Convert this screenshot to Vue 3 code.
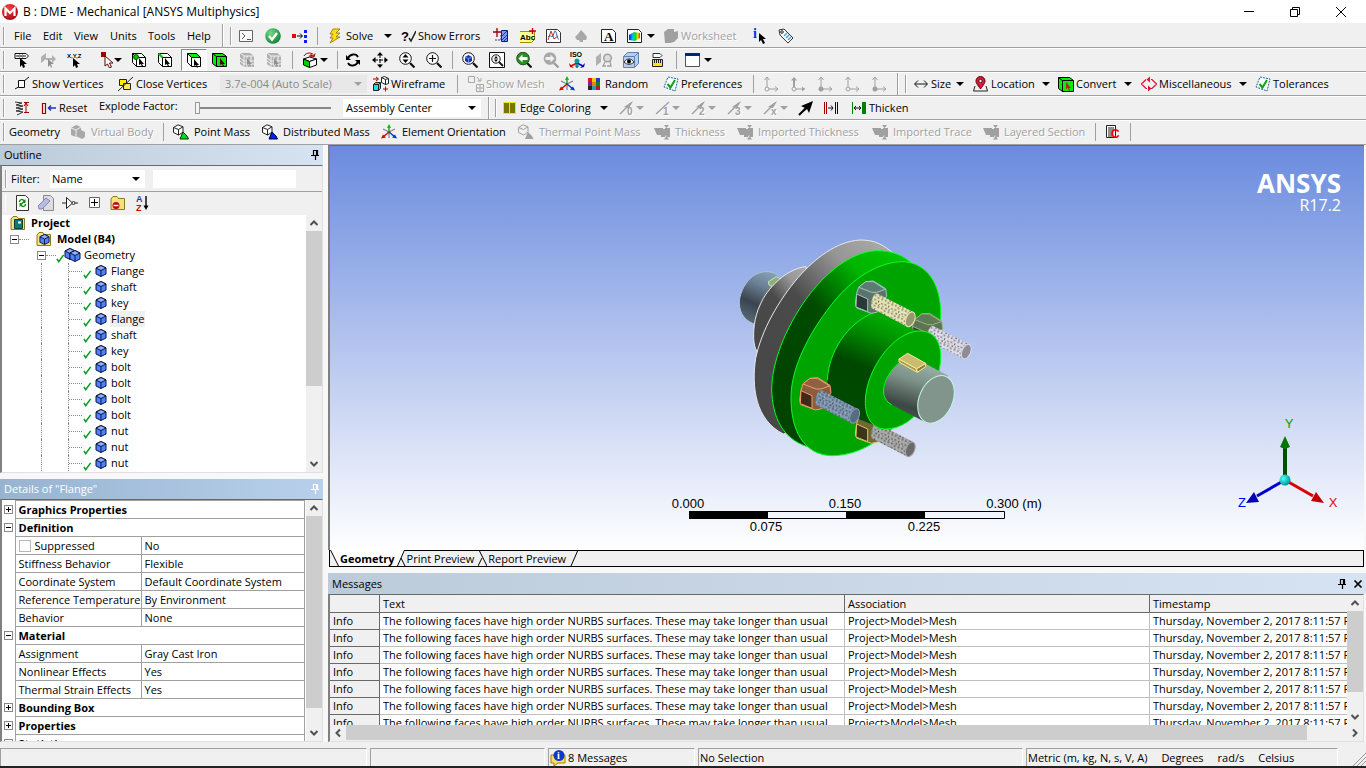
<script setup>
import { ref } from 'vue'

// toolbar item: [kind, slot width, icon, label]
// kinds: btn / off (disabled) / on (pressed) / drop / dropoff / sep / end / grip
const menuBar = [
  ['grip', 14],
  ['menu', 29, '', 'File'],
  ['menu', 31, '', 'Edit'],
  ['menu', 36, '', 'View'],
  ['menu', 38, '', 'Units'],
  ['menu', 39, '', 'Tools'],
  ['menu', 35, '', 'Help'],
  ['end', 5],
  ['grip', 12],
  ['btn', 26, 'term'],
  ['btn', 27, 'ok'],
  ['btn', 25, 'dots'],
  ['sep', 11],
  ['btn', 56, 'bolt', 'Solve'],
  ['drop', 16],
  ['btn', 93, 'qcheck', 'Show Errors'],
  ['btn', 27, 'section'],
  ['btn', 26, 'abc'],
  ['btn', 27, 'chart'],
  ['off', 28, 'spade'],
  ['btn', 26, 'lettera'],
  ['btn', 20, 'rainbow'],
  ['drop', 16],
  ['off', 90, 'sheet', 'Worksheet'],
  ['btn', 25, 'info'],
  ['btn', 20, 'tag'],
]

const selectBar = [
  ['grip', 14],
  ['btn', 26, 'label'],
  ['off', 27, 'dir'],
  ['btn', 34, 'xyz'],
  ['btn', 13, 'pick'],
  ['drop', 17],
  ['btn', 26, 'cubev'],
  ['btn', 24, 'cubee'],
  ['on', 26, 'cubef'],
  ['gap', 5],
  ['btn', 27, 'cubeb'],
  ['off', 27, 'meshb'],
  ['off', 26, 'meshb'],
  ['sep', 10],
  ['btn', 18, 'extend'],
  ['drop', 17],
  ['sep', 8],
  ['btn', 27, 'rotate'],
  ['btn', 27, 'pan'],
  ['btn', 27, 'zoomud'],
  ['btn', 26, 'zoomin'],
  ['sep', 10],
  ['btn', 27, 'zoomfit'],
  ['btn', 27, 'zoombox'],
  ['btn', 27, 'prev'],
  ['off', 26, 'next'],
  ['btn', 27, 'iso'],
  ['off', 27, 'look'],
  ['btn', 27, 'eye'],
  ['btn', 26, 'ruler'],
  ['sep', 9],
  ['btn', 19, 'window'],
  ['drop', 16],
]

const graphicsBar = [
  ['grip', 14],
  ['btn', 104, 'vert', 'Show Vertices'],
  ['btn', 102, 'close', 'Close Vertices'],
  ['scale', 153],
  ['btn', 84, 'wire', 'Wireframe'],
  ['sep', 11],
  ['off', 91, 'mesh', 'Show Mesh'],
  ['btn', 28, 'triad'],
  ['btn', 76, 'random', 'Random'],
  ['btn', 90, 'pref', 'Preferences'],
  ['sep', 10],
  ['off', 27, 'ax1'],
  ['off', 27, 'ax2'],
  ['off', 27, 'ax3'],
  ['off', 27, 'ax1'],
  ['off', 26, 'ax3'],
  ['end', 5],
  ['grip', 11],
  ['btn', 43, 'size', 'Size'],
  ['drop', 17],
  ['btn', 69, 'pin', 'Location'],
  ['drop', 16],
  ['btn', 66, 'convert', 'Convert'],
  ['drop', 17],
  ['btn', 98, 'misc', 'Miscellaneous'],
  ['drop', 16],
  ['btn', 80, 'pref', 'Tolerances'],
]

const edgeBar = [
  ['end', 4],
  ['grip', 10],
  ['btn', 98, 'edge', 'Edge Coloring'],
  ['drop', 19],
  ['off', 17, 'n0'],
  ['dropoff', 19],
  ['off', 17, 'n1'],
  ['dropoff', 19],
  ['off', 17, 'n2'],
  ['dropoff', 19],
  ['off', 17, 'n3'],
  ['dropoff', 19],
  ['off', 17, 'nx'],
  ['dropoff', 18],
  ['btn', 25, 'dart'],
  ['btn', 28, 'gap'],
  ['btn', 70, 'thick', 'Thicken'],
]

const geometryBar = [
  ['grip', 9],
  ['menu', 61, '', 'Geometry'],
  ['off', 93, 'vbody', 'Virtual Body'],
  ['sep', 10],
  ['btn', 89, 'pmass', 'Point Mass'],
  ['btn', 119, 'dmass', 'Distributed Mass'],
  ['btn', 137, 'triad', 'Element Orientation'],
  ['off', 136, 'tmass', 'Thermal Point Mass'],
  ['off', 83, 'layer', 'Thickness'],
  ['off', 135, 'layer', 'Imported Thickness'],
  ['off', 111, 'layer', 'Imported Trace'],
  ['off', 112, 'layer', 'Layered Section'],
  ['sep', 10],
  ['btn', 25, 'command'],
  ['sep', 10],
]

const bars = [
  { id: 'menu', items: menuBar },
  { id: 'select', items: selectBar },
  { id: 'graphics', items: graphicsBar },
  { id: 'edge', items: edgeBar },
  { id: 'geometry', items: geometryBar },
]

const plain = ['btn', 'off', 'on', 'menu']

// letters drawn on top of an icon
const glyphs = {
  qcheck: { text: '?', x: 1, y: 13, size: 13 },
  abc: { text: 'Abc', x: 0, y: 12, size: 8 },
  lettera: { text: 'A', x: 3, y: 13, size: 13, serif: true },
  info: { text: 'i', x: 0, y: 10, size: 14, fill: '#0030f0', serif: true },
  xyz: { text: 'X,Y,Z', x: 0, y: 6, size: 6 },
  iso: { text: 'ISO', x: 1, y: 5, size: 7 },
  n0: { text: '0', x: 8, y: 15, size: 10, fill: '#a0a0a0' },
  n1: { text: '1', x: 8, y: 15, size: 10, fill: '#a0a0a0' },
  n2: { text: '2', x: 8, y: 15, size: 10, fill: '#a0a0a0' },
  n3: { text: '3', x: 8, y: 15, size: 10, fill: '#a0a0a0' },
  nx: { text: 'x', x: 8, y: 15, size: 10, fill: '#a0a0a0' },
  command: { text: 'C', x: 6, y: 14, size: 12, fill: '#f00000' },
}

// outline tree
const bodies = ['Flange', 'shaft', 'key', 'Flange', 'shaft', 'key', 'bolt', 'bolt', 'bolt', 'bolt', 'nut', 'nut', 'nut']
const selectedBody = ref(3)
const filterText = ref('')
const explode = ref(0)

// details grid
const details = [
  { group: 'Graphics Properties', open: false },
  { group: 'Definition', open: true },
  { name: 'Suppressed', value: 'No', check: true },
  { name: 'Stiffness Behavior', value: 'Flexible' },
  { name: 'Coordinate System', value: 'Default Coordinate System' },
  { name: 'Reference Temperature', value: 'By Environment' },
  { name: 'Behavior', value: 'None' },
  { group: 'Material', open: true },
  { name: 'Assignment', value: 'Gray Cast Iron' },
  { name: 'Nonlinear Effects', value: 'Yes' },
  { name: 'Thermal Strain Effects', value: 'Yes' },
  { group: 'Bounding Box', open: false },
  { group: 'Properties', open: false },
  { group: 'Statistics', open: false },
]

const messages = Array.from({ length: 7 }, () => ({
  type: 'Info',
  text: 'The following faces have high order NURBS surfaces. These may take longer than usual',
  assoc: 'Project>Model>Mesh',
  time: 'Thursday, November 2, 2017 8:11:57 PM',
}))

// bolts behind the hub and in front of it
const backBolts = [
  { x: 168, y: 97, dark: '#33402f', mid: '#5c7454', top: '#5f7a55', line: '#93b487', rod: '#dcdae6', cap: '#8e8c98' },
  { x: 0, y: 390, dark: '#3c3618', mid: '#6f6736', top: '#8a8044', line: '#e0c860', rod: '#a9a9a9', cap: '#6a6a6a' },
]
const frontBolts = [
  { x: 0, y: 0, dark: '#2c3836', mid: '#5c736d', top: '#5f7a72', line: '#9cc8be', rod: '#e6e3b4', cap: '#98966f' },
  { x: -167, y: 290, dark: '#43281a', mid: '#8b5d3e', top: '#8f6142', line: '#ee9f66', rod: '#8199b4', cap: '#566b84' },
]
</script>

<template>
  <div class="app">
    <!-- shared icon shapes -->
    <svg class="defs" aria-hidden="true">
      <defs>
        <radialGradient id="gOk" cx=".35" cy=".3" r=".8"><stop offset="0" stop-color="#6fdc8b" /><stop offset="1" stop-color="#0a7a2c" /></radialGradient>
        <linearGradient id="gRain"><stop offset="0" stop-color="#0018e0" /><stop offset=".35" stop-color="#00c8d8" /><stop offset=".6" stop-color="#20d020" /><stop offset=".8" stop-color="#f0e000" /><stop offset="1" stop-color="#f02000" /></linearGradient>
        <radialGradient id="gRed" cx=".4" cy=".3" r=".8"><stop offset="0" stop-color="#f04848" /><stop offset="1" stop-color="#a80010" /></radialGradient>
      </defs>
      <symbol id="i-term" viewBox="0 0 16 16"><path d="M.5 2.500h13v11H.5z" fill="#f8f8f8" stroke="#666" /><path d="M3 5l3 3-3 3M8 11.500h4" fill="none" stroke="#555" /></symbol>
      <symbol id="i-ok" viewBox="0 0 16 16"><circle cx="8" cy="8" r="7.800" fill="url(#gOk)" /><path d="M4 8l3 3.500L12 5" fill="none" stroke="#fff" stroke-width="2.400" /></symbol>
      <symbol id="i-dots" viewBox="0 0 16 16"><path d="M0 6h4v4H0z" fill="#f00000" /><path d="M5 8h5M8 5.500L10.500 8 8 10.500" fill="none" stroke="#000" /><path d="M12 2h3v3h-3zM12 7h3v3h-3zM12 12h3v3h-3z" fill="#0020f0" /></symbol>
      <symbol id="i-bolt" viewBox="0 0 16 16"><path d="M5 1h7L8 5h4L8 9h4L2 15l3-5H2l3-4H2z" fill="#ffe000" stroke="#8a7000" stroke-width=".8" /></symbol>
      <symbol id="i-qcheck" viewBox="0 0 16 16"><path d="M9 10l2 3 5-10" fill="none" stroke="#222" stroke-width="1.500" /></symbol>
      <symbol id="i-section" viewBox="0 0 16 16"><path d="M8.500 2.500h6v11h-6z" fill="#7a9cf0" stroke="#002080" /><path d="M9 8l5-5M9 12l5-5M11 13l3-3" stroke="#1838a0" /><path d="M2 12h6V7" fill="none" stroke="#303880" stroke-dasharray="2 1" /><path d="M0 4h9M4 0v9" stroke="#900" stroke-width="1.300" /></symbol>
      <symbol id="i-abc" viewBox="0 0 16 16"><path d="M-.5 3.500h15v8l-3 3H-.5z" fill="#ffff90" stroke="#a09000" /><path d="M9 3h7M12.500 0v6" stroke="#c00000" stroke-width="1.300" /></symbol>
      <symbol id="i-chart" viewBox="0 0 16 16"><path d="M.5 1.500h11l3 3v10H.5z" fill="#fff" stroke="#333" /><path d="M2 12L5 3l3 8 4-3" fill="none" stroke="#c03030" /><path d="M2 9c3-4 4 4 6-4s3 8 5 6" fill="none" stroke="#4058c0" /></symbol>
      <symbol id="i-spade" viewBox="0 0 16 16"><path d="M8 2l-3 4-3 3 2 3h2l1 2h3v-2h3l1-3-3-4z" fill="#a8a8a8" /></symbol>
      <symbol id="i-lettera" viewBox="0 0 16 16"><path d="M.5 1.500h11l3 3v10H.5z" fill="#fff" stroke="#222" /></symbol>
      <symbol id="i-rainbow" viewBox="0 0 16 16"><path d="M.5 1.500h11l3 3v10H.5z" fill="#fff" stroke="#222" /><path d="M2 7l5-3 6 1v5l-5 3-6-1z" fill="url(#gRain)" /></symbol>
      <symbol id="i-sheet" viewBox="0 0 16 16"><path d="M1 4l4-3h6v3l4-1v7l-4 4-4 1H2z" fill="#a0a0a0" /></symbol>
      <symbol id="i-info" viewBox="0 0 16 16"><path d="M6 5v9l2-2 2 4 2-1-2-4h3z" fill="#000" /></symbol>
      <symbol id="i-tag" viewBox="0 0 16 16"><path d="M1 2l5-1 9 9-5 5-8-8z" fill="#fff" stroke="#333" /><path d="M6 8l3-3M8 10l3-3M10 12l3-3" stroke="#4aa0d8" stroke-width="1.500" /><circle cx="4" cy="4" r="1.300" fill="none" stroke="#222" /></symbol>
      <symbol id="i-label" viewBox="0 0 16 16"><path d="M1 1.500h11l2.500 2.500L12 6.500H1z" fill="#fff" stroke="#111" /><path d="M3 3v2M11 3v2" stroke="#111" /><circle cx="5.500" cy="4" r="1" fill="none" stroke="#111" stroke-width=".8" /><circle cx="8.500" cy="4" r="1" fill="none" stroke="#111" stroke-width=".8" /><path d="M6 6v9l2-2 1 3 2-1-1-3h3z" /></symbol>
      <symbol id="i-dir" viewBox="0 0 16 16"><path d="M1 5l5-4v6L1 11zM6 6h6V3l4 4-4 4V8H6z" fill="#b0b0b0" /><path d="M8 7v8l2-2 1 3 1-1-1-3h3z" fill="#909090" /></symbol>
      <symbol id="i-xyz" viewBox="0 0 16 16"><path d="M6 6v9l2-2 1 3 2-1-1-3h3z" /></symbol>
      <symbol id="i-pick" viewBox="0 0 16 16"><path d="M0 0h5v5H0z" fill="#a00000" /><path d="M4 4v10l2.500-2 2 4 2-1-2-4H12z" fill="#fff" stroke="#600" /></symbol>
      <symbol id="i-cubev" viewBox="0 0 16 16"><path d="M1.500 1.500h9l4 4v9h-9l-4-4zM1.500 1.500l4 4h9M5.500 5.500v9" fill="#fff" stroke="#000" /><circle cx="5" cy="5" r="2.500" fill="#00c000" stroke="#006000" /><path d="M8 6v7l2-1 1 3 1-1-1-2h2z" /></symbol>
      <symbol id="i-cubee" viewBox="0 0 16 16"><path d="M1.500 1.500h9l4 4v9h-9l-4-4zM1.500 1.500l4 4h9M5.500 5.500v9" fill="#fff" stroke="#000" /><path d="M1.500 1.500l4 4" stroke="#00c000" stroke-width="2" /><path d="M8 6v7l2-1 1 3 1-1-1-2h2z" /></symbol>
      <symbol id="i-cubef" viewBox="0 0 16 16"><path d="M1.500 1.500h9l4 4v9h-9l-4-4z" fill="#fff" stroke="#000" /><path d="M1.500 1.500h9l4 4h-9z" fill="#00f000" stroke="#000" /><path d="M5.500 5.500v9" stroke="#000" /><path d="M8 7v7l2-1 1 3 1-1-1-2h2z" /></symbol>
      <symbol id="i-cubeb" viewBox="0 0 16 16"><path d="M.5 1.500h10l4 3v10h-10l-4-3z" fill="#00f000" stroke="#000" /><path d="M.5 1.500l4 3h10M4.500 4.500v10" fill="none" stroke="#000" /><path d="M8 6v7l2-1 1 3 1-1-1-2h2z" fill="#400000" /></symbol>
      <symbol id="i-meshb" viewBox="0 0 16 16"><path d="M1 1h10l4 3v11H5l-4-3z" fill="#b0b0b0" /><path d="M1 6l4 3h10M5 12h10M8 4v11M12 4v11M5 4v11M1 9l4 3M1 1l4 3h10" fill="none" stroke="#f0f0f0" /><path d="M8 6v7l2-1 1 3 1-1-1-2h2z" fill="#909090" /></symbol>
      <symbol id="i-extend" viewBox="0 0 16 16"><path d="M1.500 7l6-2 7 2-7 2.500z" fill="#fff" stroke="#000" /><path d="M1.500 7v6l6 2.500v-6z" fill="#00d000" stroke="#000" /><path d="M7.500 9.500l7-2.500v6l-7 2.500z" fill="#fff" stroke="#000" /><path d="M2 4c2-4 9-4 10 0M9 3l3 2 1-3.500M7 4h4M9 2v4" fill="none" stroke="#a00000" /></symbol>
      <symbol id="i-rotate" viewBox="0 0 16 16"><path d="M3 6c2-4 8-5 10-1M13 10c-2 4-8 5-10 1" fill="none" stroke="#000" stroke-width="1.800" /><path d="M1 3v5h5zM15 13V8h-5z" /></symbol>
      <symbol id="i-pan" viewBox="0 0 16 16"><path d="M8 2v12M2 8h12" stroke="#000" stroke-dasharray="4 1" /><path d="M8 0l3 3.500H5zM8 16l3-3.500H5zM0 8l3.500-3v6zM16 8l-3.500-3v6z" /></symbol>
      <symbol id="i-lens" viewBox="0 0 16 16"><circle cx="6.500" cy="6.500" r="5.800" fill="#fff" stroke="#111" /><path d="M11 11l4.500 4.500" stroke="#111" stroke-width="2.200" /></symbol>
      <symbol id="i-zoomud" viewBox="0 0 16 16"><use href="#i-lens" /><path d="M6.500 2l3 3.500h-6zM6.500 11l3-3.500h-6z" /></symbol>
      <symbol id="i-zoomin" viewBox="0 0 16 16"><use href="#i-lens" /><path d="M6.500 3v7M3 6.500h7" stroke="#111" stroke-width="1.200" /></symbol>
      <symbol id="i-zoomfit" viewBox="0 0 16 16"><use href="#i-lens" /><path d="M3 5l3.500-2L10 5v4l-3.500 2L3 9z" fill="#1838a8" /><path d="M3 5l3.500 1.500L10 5M6.500 6.500V11" stroke="#9ab4ff" fill="none" stroke-width=".7" /></symbol>
      <symbol id="i-zoombox" viewBox="0 0 16 16"><path d="M.5.5h15v15H.5z" fill="#fff" stroke="#111" /><circle cx="7" cy="7" r="4.200" fill="none" stroke="#111" /><path d="M10 10l4 4" stroke="#111" stroke-width="1.800" /><path d="M7 4l2 2.500H5zM7 10l2-2.500H5z" /></symbol>
      <symbol id="i-prev" viewBox="0 0 16 16"><path d="M11 11l4.500 4.500" stroke="#111" stroke-width="2.200" /><circle cx="7" cy="6.500" r="6.300" fill="#2f8a28" stroke="#1a5a18" /><path d="M2.500 6.500l4-4v2.500h5v3h-5v2.500z" fill="#fff" /></symbol>
      <symbol id="i-next" viewBox="0 0 16 16"><path d="M11 11l4.500 4.500" stroke="#999" stroke-width="2.200" /><circle cx="7" cy="6.500" r="6.300" fill="#a8a8a8" /><path d="M11.500 6.500l-4-4v2.500h-5v3h5v2.500z" fill="#f0f0f0" /></symbol>
      <symbol id="i-iso" viewBox="0 0 16 16"><path d="M8 10v5" stroke="#008080" stroke-width="1.500" /><path d="M8 11l-6 3" stroke="#d00000" stroke-width="1.500" /><path d="M8 11l6 3" stroke="#0000c0" stroke-width="1.500" /><path d="M0 11l1 4 4 1z" fill="#d00000" /><path d="M16 11l-1 4-4 1z" fill="#0000c0" /><path d="M5.500 13.500h5L8 16.500z" fill="#008080" /><circle cx="8" cy="9" r="2.500" fill="#00a0a0" /></symbol>
      <symbol id="i-look" viewBox="0 0 16 16"><path d="M0 5l5-4v9l-5 4z" fill="#b0b0b0" /><circle cx="11.500" cy="6" r="3.800" fill="#ddd" stroke="#a0a0a0" stroke-width="1.500" /><path d="M9 10l-2 4h3M14 9l1 5h-4" fill="none" stroke="#a0a0a0" stroke-width="1.300" /></symbol>
      <symbol id="i-eye" viewBox="0 0 16 16"><path d="M.5 4.500l4-4h11v11l-4 4H.5z" fill="#b8ccec" stroke="#6080b0" /><path d="M.5 4.500h11v11M11.500 4.500l4-4" fill="none" stroke="#6080b0" /><path d="M1 10c3-4 7-4 10 0-3 3-7 3-10 0z" fill="#fff" stroke="#222" /><circle cx="6" cy="9.500" r="2" /></symbol>
      <symbol id="i-ruler" viewBox="0 0 16 16"><path d="M3 1.500h7l2 2-2 2H3z" fill="#fff" stroke="#333" /><path d="M2.500 7.500h10v7h-10z" fill="#ffe800" stroke="#222" /><path d="M4.500 8v3M6.500 8v3M8.500 8v3M10.500 8v3" stroke="#222" /></symbol>
      <symbol id="i-window" viewBox="0 0 16 16"><path d="M.5 1.500h14v13H.5z" fill="#fff" stroke="#555" /><path d="M0 1h15v3H0z" fill="#002878" /></symbol>
      <symbol id="i-vert" viewBox="0 0 16 16"><path d="M4.500 4.500h6v7h-6z" fill="#fff" stroke="#111" /><path d="M1 13l3.500-2M10 5l5-4" stroke="#111" /></symbol>
      <symbol id="i-close" viewBox="0 0 16 16"><path d="M1.500 3.500h7v6h-7z" fill="#fff200" stroke="#222" /><path d="M5.500 7.500h7v6h-7z" fill="#ffe850" stroke="#222" /><path d="M0 15l15-14" stroke="#222" /></symbol>
      <symbol id="i-wire" viewBox="0 0 16 16"><path d="M0 3h5M3 1l2.500 2L3 5" fill="none" stroke="#a00000" /><path d="M8.500 1.500l3-1 4 2v5l-3 1-4-2zM8.500 1.500l4 2v5M12.500 3.500l3-1" fill="#fff" stroke="#222" /><path d="M.5 8.500l2-2h5v6l-2 2h-5z" fill="#20e0f0" stroke="#222" /><path d="M.5 8.500h5v6M5.500 8.500l2-2" fill="none" stroke="#222" /><path d="M10 13h5M12.500 10.500v5" stroke="#c00000" /></symbol>
      <symbol id="i-mesh" viewBox="0 0 16 16"><path d="M.5.5h6v6h-6zM8.500 8.500h7v7h-7zM12 8.500v7M8.500 12h7M9 1l3 4M9.500 5H13V2" fill="none" stroke="#a8a8a8" /></symbol>
      <symbol id="i-triad" viewBox="0 0 16 16"><path d="M8 2v6" stroke="#00b000" stroke-width="1.400" /><path d="M8 0l2 4H6z" fill="#00c000" /><path d="M8 8l-6 5" stroke="#d00000" stroke-width="1.400" /><path d="M0 14.500l2-4 3 3z" fill="#e00000" /><path d="M8 8l6 5" stroke="#0030d0" stroke-width="1.400" /><path d="M16 14.500l-2-4-3 3z" fill="#0030e0" /><path d="M2 5l6 3 6-3M8 8v6" stroke="#444" stroke-width=".8" fill="none" /></symbol>
      <symbol id="i-random" viewBox="0 0 16 16"><path d="M1 2h4v4H1z" fill="#e01818" /><path d="M5 2h4v4H5z" fill="#f0c800" /><path d="M9 2h4v4H9z" fill="#2040c0" /><path d="M1 6h4v4H1z" fill="#8020a0" /><path d="M5 6h4v4H5z" fill="#f08000" /><path d="M9 6h4v4H9z" fill="#108030" /><path d="M1 10h4v4H1z" fill="#302020" /><path d="M5 10h4v4H5z" fill="#20a0c0" /><path d="M9 10h4v4H9z" fill="#b02020" /></symbol>
      <symbol id="i-pref" viewBox="0 0 16 16"><path d="M5 1l10 2-3 12L1 11z" fill="#f6fbff" stroke="#24609a" stroke-dasharray="2 1" /><path d="M4.500 8l3 3.500L12 4" fill="none" stroke="#10a010" stroke-width="2" /></symbol>
      <symbol id="i-ax1" viewBox="0 0 16 16"><path d="M4 14V2M4 13h11" stroke="#a0a0a0" /><path d="M1.500 4L4 1l2.500 3M12 10.500l3 2.500-3 2.500" fill="none" stroke="#a0a0a0" /><circle cx="4" cy="13" r="2" fill="#f0f0f0" stroke="#a0a0a0" /></symbol>
      <symbol id="i-ax2" viewBox="0 0 16 16"><path d="M4 13h11" stroke="#a0a0a0" /><path d="M4 14V2" stroke="#a0a0a0" stroke-width="2" /><path d="M1 4.500h6L4 1zM12 10.500l3 2.500-3 2.500" fill="#a0a0a0" /><circle cx="4" cy="13" r="2" fill="#f0f0f0" stroke="#a0a0a0" /></symbol>
      <symbol id="i-ax3" viewBox="0 0 16 16"><path d="M4 14V2M4 13h11" stroke="#a0a0a0" /><path d="M1.500 4L4 1l2.500 3M12 10.500l3 2.500-3 2.500" fill="none" stroke="#a0a0a0" /><circle cx="4" cy="13" r="2.500" fill="#a0a0a0" /></symbol>
      <symbol id="i-size" viewBox="0 0 16 16"><path d="M2 8h12M5 4.500L1.500 8 5 11.500M11 4.500L14.500 8 11 11.500" fill="none" stroke="#111" /></symbol>
      <symbol id="i-pin" viewBox="0 0 16 16"><path d="M2 10l-1.500 5h14L13 10" fill="none" stroke="#222" /><path d="M7.500 13C4 8 3 7 3 5a4.500 4.500 0 019 0c0 2-1 3-4.500 8z" fill="#e01838" stroke="#500" /><circle cx="7.500" cy="5" r="1.700" fill="#fff" stroke="#222" /></symbol>
      <symbol id="i-convert" viewBox="0 0 16 16"><path d="M.5 1.500h11l4 3v11h-11l-4-3z" fill="#00f000" stroke="#000" /><path d="M.5 1.500l4 3h11M4.500 4.500v11" fill="none" stroke="#000" /><path d="M8 6v7l2-1 1 3 1-1-1-2h2z" fill="#c02020" /></symbol>
      <symbol id="i-misc" viewBox="0 0 16 16"><path d="M6 3.500h1M6 12.500H5L1.500 9M10 3.500h1L14.500 7M1.500 7L5 3.500M14.500 9L11 12.500h-1M1.500 7L0 8l1.500 1M14.500 7L16 8l-1.500 1" fill="none" stroke="#e01030" stroke-width="1.200" /><path d="M9 .5v6L5.500 3.500zM7 15.500v-6l3.500 3z" fill="#e01030" /></symbol>
      <symbol id="i-spring" viewBox="0 0 16 16"><path d="M1 2l7 1-6 2 7 1-7 2 7 1-7 2 7 1-6 3" fill="none" stroke="#333" /><path d="M12 3v9M10 2.500h5M10 12.500h5M10 6l2-3 2 3" fill="none" stroke="#a00000" /></symbol>
      <symbol id="i-reset" viewBox="0 0 16 16"><path d="M1.500 3.500h3v10h-3z" fill="none" stroke="#a00000" stroke-width="1.200" /><path d="M8 8h7M10 5.500L7.500 8l2.500 2.500" fill="none" stroke="#2030c0" stroke-width="1.500" /></symbol>
      <symbol id="i-edge" viewBox="0 0 16 16"><path d="M1 2h13v12H1z" fill="#e8e800" /><path d="M2 3h5v10H2zM8 3h5v10H8z" fill="#787800" /></symbol>
      <symbol id="i-stroke" viewBox="0 0 16 16"><path d="M1 14L12 3" stroke="#a0a0a0" stroke-width="1.500" /><path d="M14 1L5 7l5 1z" fill="#a0a0a0" /></symbol>
      <symbol id="i-n0" viewBox="0 0 16 16"><use href="#i-stroke" /></symbol>
      <symbol id="i-n1" viewBox="0 0 16 16"><path d="M1 14L14 2" stroke="#a0a0a0" stroke-width="1.300" /></symbol>
      <symbol id="i-n2" viewBox="0 0 16 16"><use href="#i-stroke" /></symbol>
      <symbol id="i-n3" viewBox="0 0 16 16"><use href="#i-stroke" /></symbol>
      <symbol id="i-nx" viewBox="0 0 16 16"><use href="#i-stroke" /></symbol>
      <symbol id="i-dart" viewBox="0 0 16 16"><path d="M1 15L9 7" stroke="#000" stroke-width="2" /><path d="M15 1L3 6l4 2-3 5 5-4 2 4z" /></symbol>
      <symbol id="i-gap" viewBox="0 0 16 16"><path d="M1.500 2v12M3.500 2v12" stroke="#a00000" /><path d="M5 8h5M8 5.500L10 8l-2 2.500M12.500 2v12M14.500 2v12" fill="none" stroke="#111" /></symbol>
      <symbol id="i-thick" viewBox="0 0 16 16"><path d="M1.500 2v12" stroke="#008000" /><path d="M3 8h7M5 6L3 8l2 2M8 6l2 2-2 2" fill="none" stroke="#111" /><path d="M11 2h4v12h-4z" fill="#008000" /></symbol>
      <symbol id="i-vbody" viewBox="0 0 16 16"><path d="M1 4l5-3 5 2v9l-5 1-5-2zM8 8l3-2 4 2v5l-3 2-4-2z" fill="#a8a8a8" /><path d="M1 4l5 2 5-3M6 6v7" fill="none" stroke="#f0f0f0" /></symbol>
      <symbol id="i-wcube" viewBox="0 0 16 16"><path d="M.5 3.500L5 .8l5 2v5.500L5.500 11l-5-2.500z" fill="#fff" stroke="#222" /><path d="M.5 3.500l5 2 4.500-2.700M5.500 5.500V11" fill="none" stroke="#222" /></symbol>
      <symbol id="i-pmass" viewBox="0 0 16 16"><use href="#i-wcube" /><path d="M10 8l4 4 1.500 3H7z" fill="#00d820" stroke="#003800" /></symbol>
      <symbol id="i-dmass" viewBox="0 0 16 16"><use href="#i-wcube" /><path d="M10 8l4 4 1.500 3H7z" fill="#0020f0" stroke="#000040" /></symbol>
      <symbol id="i-tmass" viewBox="0 0 16 16"><path d="M.5 3.500L5 .8l5 2v5.500L5.500 11l-5-2.500zM.5 3.500l5 2 4.500-2.700" fill="none" stroke="#a0a0a0" /><path d="M10 8l4 4 1.500 3H7z" fill="#a0a0a0" /></symbol>
      <symbol id="i-layer" viewBox="0 0 16 16"><path d="M0 4h9v1h2V4h5v9h-3l-1-2-1 2H7v-2H3z" fill="#a0a0a0" /><path d="M10 1h5l-2.500 3zM10 15.500h5L12.500 12z" fill="#a0a0a0" /></symbol>
      <symbol id="i-command" viewBox="0 0 16 16"><path d="M1.500 1.500h9v12h-9z" fill="#fff" stroke="#222" /><path d="M3 4h6M3 6h6M3 8h5M3 10h4M3 12h4" stroke="#222" /></symbol>
      <symbol id="i-pinned" viewBox="0 0 10 10"><path d="M3.500 5.500v-5h4v5M1 5.500h8M5.500 6v4M6.500 1v4" fill="none" stroke="currentColor" stroke-width="1.200" /></symbol>
      <symbol id="i-cube" viewBox="0 0 12 12"><path d="M1 3l5-2.500L11 3v6l-5 2.500L1 9z" fill="#4f82ff" stroke="#0a1440" stroke-linejoin="round" /><path d="M1 3l5 2.500L11 3 6 .5z" fill="#8cb0ff" stroke="#0a1440" stroke-linejoin="round" /><path d="M6 5.500v6" stroke="#0a1440" /></symbol>
      <symbol id="i-tick" viewBox="0 0 10 10"><path d="M1 5.500l2 3L8.500 1" fill="none" stroke="#009a10" stroke-width="1.600" /></symbol>
      <symbol id="i-folder" viewBox="0 0 16 16"><path d="M1 4l2-2.500h4L9 4V3.500h5.500v11H1z" fill="#f4e27c" stroke="#8a7a20" /></symbol>
      <symbol id="i-up" viewBox="0 0 16 16"><path d="M4.500 10L8 6.500l3.500 3.500" fill="none" stroke="#505050" stroke-width="2" /></symbol>
      <symbol id="i-down" viewBox="0 0 16 16"><path d="M4.500 6L8 9.500 11.500 6" fill="none" stroke="#505050" stroke-width="2" /></symbol>
      <symbol id="i-left" viewBox="0 0 16 16"><path d="M10 4.500L6.500 8l3.500 3.500" fill="none" stroke="#505050" stroke-width="2" /></symbol>
      <symbol id="i-right" viewBox="0 0 16 16"><path d="M6 4.500L9.500 8 6 11.500" fill="none" stroke="#505050" stroke-width="2" /></symbol>
    </svg>

    <!-- title bar -->
    <header class="title-bar">
      <svg class="logo" viewBox="0 0 16 16"><circle cx="8" cy="8" r="8" fill="url(#gRed)" /><path d="M3.500 12V4.500L8 9l4.500-4.500V12" fill="none" stroke="#fff" stroke-width="2.200" /></svg>
      <h1>B : DME - Mechanical [ANSYS Multiphysics]</h1>
      <div class="window-buttons">
        <button aria-label="Minimize"><svg viewBox="0 0 12 12"><path d="M1 5.500h10" stroke="#000" /></svg></button>
        <button aria-label="Restore"><svg viewBox="0 0 12 12"><path d="M1.500 3.500h7v7h-7zM3.500 3V1.500h7v7H9" fill="none" stroke="#000" /></svg></button>
        <button aria-label="Close"><svg viewBox="0 0 12 12"><path d="M1 1l10 10M11 1L1 11" stroke="#000" /></svg></button>
      </div>
    </header>

    <!-- toolbars -->
    <nav v-for="bar in bars" :key="bar.id" class="bar" :class="bar.id">
      <template v-if="bar.id === 'edge'">
        <span class="grip wide"></span>
        <button class="tool spring" aria-label="Explode"><svg class="ico"><use href="#i-spring" /></svg></button>
        <button class="tool reset"><svg class="ico"><use href="#i-reset" /></svg><span>Reset</span></button>
        <label class="explode" for="explode">Explode Factor:</label>
        <input id="explode" v-model="explode" class="slider" type="range" min="0" max="10" />
        <div class="combo assembly">
          <select aria-label="Explode center"><option>Assembly Center</option></select>
          <i class="arrow"></i>
        </div>
      </template>
      <template v-for="(item, i) in bar.items" :key="i">
        <button
          v-if="plain.includes(item[0])"
          class="tool"
          :class="item[0]"
          :style="{ width: item[1] + 'px' }"
          :disabled="item[0] === 'off'"
          :aria-label="item[3] || item[2]"
        >
          <svg v-if="item[2]" class="ico" viewBox="0 0 16 16">
            <use :href="'#i-' + item[2]" />
            <text
              v-if="glyphs[item[2]]"
              class="glyph"
              :class="{ serif: glyphs[item[2]].serif }"
              :x="glyphs[item[2]].x"
              :y="glyphs[item[2]].y"
              :font-size="glyphs[item[2]].size"
              :fill="glyphs[item[2]].fill"
            >{{ glyphs[item[2]].text }}</text>
          </svg>
          <span v-if="item[3]">{{ item[3] }}</span>
        </button>
        <button v-else-if="item[0].startsWith('drop')" class="tool" :class="item[0]" :style="{ width: item[1] + 'px' }" aria-label="More"><i class="arrow"></i></button>
        <div v-else-if="item[0] === 'scale'" class="combo scale">
          <select aria-label="Vertex scale" disabled><option>3.7e-004 (Auto Scale)</option></select>
          <i class="arrow"></i>
        </div>
        <span v-else :class="item[0]" :style="{ width: item[1] + 'px' }"></span>
      </template>
    </nav>

    <div class="work">
      <aside class="side">
        <!-- outline -->
        <section class="panel outline">
          <h2 class="caption"><span>Outline</span><svg class="pin"><use href="#i-pinned" /></svg></h2>
          <div class="frame">
            <div class="filter">
              <span class="grip filter-grip"></span>
              <label for="filter-by">Filter:</label>
              <div class="combo filter-by">
                <select id="filter-by"><option>Name</option></select>
                <i class="arrow"></i>
              </div>
              <input v-model="filterText" class="filter-text" type="text" aria-label="Filter text" />
            </div>
            <div class="tree-tools">
              <span class="grip"></span>
              <button aria-label="Refresh"><svg viewBox="0 0 16 16"><path d="M2.500.5h9l3 3v12h-12z" fill="#fff" stroke="#333" /><path d="M5.500 7c0-3 3-3 5-1M11.500 9c0 3-3 3-5 1" fill="none" stroke="#109010" stroke-width="1.500" /><path d="M11.500 4v4h-4zM5.500 12V8h4z" fill="#109010" /></svg></button>
              <button aria-label="Clear"><svg viewBox="0 0 16 16"><path d="M5.500.5h7l3 3v12h-10z" fill="#ddd" stroke="#888" /><path d="M0 11l8-8 4 3-8 8H1z" fill="#b8bce0" stroke="#8088b8" /></svg></button>
              <button aria-label="Invert"><svg viewBox="0 0 16 16"><path d="M0 8h4M4.500 2.500l6 5.500-6 5.500zM13 8h3" fill="#fff" stroke="#222" /><circle cx="11.500" cy="8" r="1.500" fill="#fff" stroke="#222" /></svg></button>
              <button aria-label="Expand all"><svg viewBox="0 0 16 16"><path d="M3.500 2.500h10v10h-10z" fill="#fff" stroke="#666" /><path d="M5 7.500h7M8.500 4v7" stroke="#000" /></svg></button>
              <button aria-label="Hide folders"><svg viewBox="0 0 16 16"><use href="#i-folder" /><circle cx="6" cy="10.500" r="3.500" fill="#c00018" /><path d="M3.500 10.500h5" stroke="#fff" stroke-width="1.500" /></svg></button>
              <button aria-label="Sort">
                <svg viewBox="0 0 16 16"><text class="glyph" x="2" y="7" font-size="9" fill="#1840a0">A</text><text class="glyph" x="2" y="16" font-size="9" fill="#c01010">Z</text><path d="M12 1v11" stroke="#111" stroke-width="1.500" /><path d="M9.500 10.500h5L12 15z" /></svg>
              </button>
            </div>
            <div class="scroll-box">
              <ul class="tree">
                <li class="root">
                  <svg class="ico" viewBox="0 0 16 16"><use href="#i-folder" /><path d="M4.500 4.500h8v9h-8z" fill="#0d7a78" stroke="#043" /><path d="M8 6.500h3v2H8z" fill="#fff" /></svg>
                  <b>Project</b>
                </li>
                <li class="model">
                  <button class="box minus" aria-label="Collapse"></button><span class="dash"></span>
                  <svg class="ico" viewBox="0 0 16 16"><use href="#i-folder" /><use href="#i-cube" x="3" y="3" width="11" height="11" /></svg>
                  <b>Model (B4)</b>
                </li>
                <li class="geometry">
                  <button class="box minus" aria-label="Collapse"></button><span class="dash"></span>
                  <svg class="tick"><use href="#i-tick" /></svg>
                  <svg class="ico" viewBox="0 0 16 16"><use href="#i-cube" x="-1" y="1" width="12" height="12" /><use href="#i-cube" x="4" y="3" width="12" height="12" /></svg>
                  <span>Geometry</span>
                </li>
                <li v-for="(name, i) in bodies" :key="i" class="body" @click="selectedBody = i">
                  <span class="trunk"></span><span class="branch"></span>
                  <svg class="tick"><use href="#i-tick" /></svg>
                  <svg class="cube"><use href="#i-cube" /></svg>
                  <span class="name" :class="{ selected: selectedBody === i }">{{ name }}</span>
                </li>
              </ul>
              <div class="scrollbar">
                <button aria-label="Up"><svg><use href="#i-up" /></svg></button>
                <div class="track"><div class="thumb tree-thumb"></div></div>
                <button aria-label="Down"><svg><use href="#i-down" /></svg></button>
              </div>
            </div>
          </div>
        </section>

        <!-- details -->
        <section class="panel details">
          <h2 class="caption active"><span>Details of "Flange"</span><svg class="pin"><use href="#i-pinned" /></svg></h2>
          <div class="frame">
            <div class="scroll-box">
              <div class="grid-wrap">
                <table class="grid">
                  <colgroup><col class="c-box" /><col class="c-name" /><col /></colgroup>
                  <tbody>
                    <tr v-for="(row, i) in details" :key="i">
                      <td class="gutter"><button v-if="row.group" class="box" :class="row.open ? 'minus' : 'plus'" aria-label="Toggle group"></button></td>
                      <th v-if="row.group" colspan="2">{{ row.group }}</th>
                      <template v-else>
                        <td>
                          <label v-if="row.check" class="check"><input type="checkbox" />{{ row.name }}</label>
                          <template v-else>{{ row.name }}</template>
                        </td>
                        <td>{{ row.value }}</td>
                      </template>
                    </tr>
                  </tbody>
                </table>
              </div>
              <div class="scrollbar">
                <button aria-label="Up"><svg><use href="#i-up" /></svg></button>
                <div class="track"><div class="thumb details-thumb"></div></div>
                <button aria-label="Down"><svg><use href="#i-down" /></svg></button>
              </div>
            </div>
          </div>
        </section>
      </aside>

      <main class="main">
        <!-- 3D view -->
        <div class="view">
          <svg class="scene" viewBox="330 146 1034 404" preserveAspectRatio="xMidYMid meet">
            <defs>
              <linearGradient id="sRear" x1=".7" y1="0" x2=".3" y2="1"><stop offset="0" stop-color="#8aa2b8" /><stop offset=".3" stop-color="#6c8195" /><stop offset=".65" stop-color="#3a444e" /><stop offset="1" stop-color="#5a6a78" /></linearGradient>
              <linearGradient id="sGray" x1=".9" y1="0" x2=".2" y2=".8"><stop offset="0" stop-color="#b0b0b0" /><stop offset=".3" stop-color="#969696" /><stop offset=".6" stop-color="#4a4a4a" /><stop offset="1" stop-color="#484848" /></linearGradient>
              <linearGradient id="sGreen" x1=".85" y1="0" x2=".2" y2=".7"><stop offset="0" stop-color="#00c800" /><stop offset=".3" stop-color="#00b400" /><stop offset=".62" stop-color="#004c00" /><stop offset="1" stop-color="#004400" /></linearGradient>
              <linearGradient id="sHub" x1=".75" y1="0" x2=".35" y2="1"><stop offset="0" stop-color="#00c000" /><stop offset=".25" stop-color="#009400" /><stop offset=".55" stop-color="#004800" /><stop offset="1" stop-color="#004a00" /></linearGradient>
              <linearGradient id="sShaft" x1=".7" y1="0" x2=".35" y2="1"><stop offset="0" stop-color="#9ab4a8" /><stop offset=".35" stop-color="#7b8f86" /><stop offset=".75" stop-color="#3c4643" /><stop offset="1" stop-color="#4c5854" /></linearGradient>
              <pattern id="thread" width="34" height="26" patternUnits="userSpaceOnUse" patternTransform="rotate(27)">
                <path d="M1 1h3v5H1zM10 4h6v3h-6zM24 1h3v6h-3zM4 13h6v3H4zM17 12h3v6h-3zM28 15h5v3h-5zM1 21h3v3H1zM12 22h5v3h-5zM23 21h3v4h-3z" fill="#222" fill-opacity=".75" />
                <path d="M6 7h3v3H6zM20 8h3v3h-3zM28 22h3v3h-3z" fill="#fff" fill-opacity=".4" />
              </pattern>
              <radialGradient id="sBall" cx=".35" cy=".35" r=".7"><stop offset="0" stop-color="#50ffff" /><stop offset="1" stop-color="#009090" /></radialGradient>
            </defs>

            <g transform="translate(730 230) scale(.33333)" stroke-width="3" stroke-linejoin="round">
              <path d="M170 170C150 130 125 122 98 126C50 135 28 190 28 218C28 255 50 275 78 284L170 250z" fill="url(#sRear)" stroke="#a8c4dc" />
              <path d="M115 155l24-15 18 9-24 24-16-8z" fill="#8fae80" stroke="#c8e8b0" />
              <path d="M228 110C180 115 130 155 100 205C75 250 70 290 71 325C72 345 76 360 84 366L260 300z" fill="url(#sGray)" stroke="#e8e8e8" />
              <path d="M480 62C450 38 425 30 390 30C320 34 255 85 205 142C145 212 95 300 77 385C64 470 76 570 160 612L350 560L560 120z" fill="url(#sGray)" stroke="#e8e8e8" />
              <path d="M550 105C520 74 485 62 440 62C360 66 285 130 230 205C165 295 125 400 125 480C128 560 155 625 232 650L460 600L600 140z" fill="url(#sGreen)" stroke="#00ff20" />
              <path d="M518 95C590 98 632 160 632 250C632 330 610 430 550 520C490 610 400 677 306 677C220 675 182 600 183 500C184 410 240 300 320 205C380 135 455 95 518 95z" fill="#00a400" stroke="#00ff20" />
              <g v-for="(b, i) in backBolts" :key="'b' + i" :transform="`translate(${b.x} ${b.y})`">
                <path d="M386 172L407 155L430 153L467 176L470 198L443 246L424 250L380 234L376 222L380 190z" :fill="b.mid" :stroke="b.line" />
                <path d="M380 192L413 207L413 245L378 231z" :fill="b.dark" :stroke="b.line" />
                <path d="M386 172L407 155L430 155L466 178L440 187L425 187z" :fill="b.top" :stroke="b.line" />
                <path d="M440 190L550 246C560 262 550 292 532 290L424 234C422 214 428 194 440 190z" :fill="b.rod" />
                <path d="M440 190L550 246C560 262 550 292 532 290L424 234C422 214 428 194 440 190z" fill="url(#thread)" />
                <ellipse cx="541" cy="268" rx="13" ry="23" transform="rotate(22 541 268)" :fill="b.cap" :stroke="b.rod" />
              </g>
              <path d="M430 248C350 280 295 370 292 450C295 510 310 545 340 550L450 592L620 360L565 303z" fill="url(#sHub)" stroke="none" />
              <path d="M430 248C350 280 295 370 292 450" fill="none" stroke="#00ff20" />
              <path d="M570 303C612 303 632 335 632 380C632 470 560 597 467 597C425 597 405 560 406 512C408 420 490 303 570 303z" fill="#00a400" stroke="#00ff20" />
              <path d="M508 398C474 425 458 465 461 490C464 508 474 518 485 524L592 580L655 437L588 402z" fill="url(#sShaft)" />
              <path d="M508 398C474 425 458 465 461 490C464 508 474 518 485 524" fill="none" stroke="#00ff20" />
              <ellipse cx="618" cy="508" rx="50" ry="75" transform="rotate(24 618 508)" fill="#81958d" stroke="#c4f4e8" />
              <path d="M507 387L560 416V426L507 396z" fill="#a89a50" stroke="#ffe890" />
              <path d="M560 416L587 400V410L562 427z" fill="#8a7d3c" stroke="#ffe890" />
              <path d="M507 387L533 370L587 400L560 416z" fill="#c8bb72" stroke="#ffe890" />
              <g v-for="(b, i) in frontBolts" :key="'f' + i" :transform="`translate(${b.x} ${b.y})`">
                <path d="M386 172L407 155L430 153L467 176L470 198L443 246L424 250L380 234L376 222L380 190z" :fill="b.mid" :stroke="b.line" />
                <path d="M380 192L413 207L413 245L378 231z" :fill="b.dark" :stroke="b.line" />
                <path d="M386 172L407 155L430 155L466 178L440 187L425 187z" :fill="b.top" :stroke="b.line" />
                <path d="M440 190L550 246C560 262 550 292 532 290L424 234C422 214 428 194 440 190z" :fill="b.rod" />
                <path d="M440 190L550 246C560 262 550 292 532 290L424 234C422 214 428 194 440 190z" fill="url(#thread)" />
                <ellipse cx="541" cy="268" rx="13" ry="23" transform="rotate(22 541 268)" :fill="b.cap" :stroke="b.rod" />
              </g>
            </g>

            <!-- scale ruler -->
            <path d="M689.500 511.500h315v7h-315z" fill="#f4f6fd" stroke="#000" />
            <path d="M689 511h79v8h-79zM846 511h79v8h-79z" />
            <g class="ruler-text">
              <text x="688" y="508">0.000</text>
              <text x="845" y="508">0.150</text>
              <text x="1014" y="508">0.300 (m)</text>
              <text x="766" y="531">0.075</text>
              <text x="924" y="531">0.225</text>
            </g>

            <!-- axis triad -->
            <path d="M1285 480V447" stroke="#005000" stroke-width="4" />
            <path d="M1285 436l5 11-5 2-5-2z" fill="#007800" />
            <path d="M1285 480l28 16" stroke="#d80000" stroke-width="3" />
            <path d="M1324 503l-13-2 5-9z" fill="#c00000" />
            <path d="M1285 480l-28 16" stroke="#0000d0" stroke-width="3" />
            <path d="M1246 503l13-1-5-10z" fill="#0000b8" />
            <circle cx="1285" cy="480" r="5.500" fill="url(#sBall)" />
            <g class="axis-text">
              <text x="1289" y="428" fill="#00a000">Y</text>
              <text x="1333" y="507" fill="#f00000">X</text>
              <text x="1242" y="507" fill="#0000f0">Z</text>
            </g>
            <text class="brand" x="1341" y="193">ANSYS</text>
            <text class="release" x="1341" y="211">R17.2</text>
          </svg>
        </div>

        <div class="tabs">
          <svg class="slant first" viewBox="0 0 9 16"><path d="M0 0l8 16H0z" fill="#f0f0f0" /><path d="M.5 0l8 16" stroke="#000" /></svg>
          <button class="tab current">Geometry</button>
          <svg class="slant" viewBox="0 0 9 16"><path d="M0 0h8L0 16z" fill="#fff" /><path d="M.5 16l7-16M4 8l4 8M7 .5h2" stroke="#000" fill="none" /></svg>
          <button class="tab">Print Preview</button>
          <svg class="slant" viewBox="0 0 9 16"><path d="M0 .5h9M1 0l8 16M0 16l4-8" stroke="#000" /></svg>
          <button class="tab">Report Preview</button>
          <svg class="slant" viewBox="0 0 9 16"><path d="M0 .5h9M1 16L8 0" stroke="#000" /></svg>
          <span class="tab-rest"></span>
        </div>

        <!-- messages -->
        <section class="messages">
          <h2 class="caption">
            <span>Messages</span>
            <svg class="pin"><use href="#i-pinned" /></svg>
            <button aria-label="Close messages"><svg viewBox="0 0 10 10"><path d="M1.500 1.500l7 7M8.500 1.500l-7 7" stroke="#000" stroke-width="1.700" /></svg></button>
          </h2>
          <div class="frame">
            <div class="scroll-box">
              <div class="table-wrap">
                <table class="log">
                  <colgroup><col class="c-type" /><col class="c-text" /><col class="c-assoc" /><col class="c-time" /></colgroup>
                  <thead><tr><th></th><th>Text</th><th>Association</th><th>Timestamp</th></tr></thead>
                  <tbody>
                    <tr v-for="(m, i) in messages" :key="i">
                      <td>{{ m.type }}</td><td>{{ m.text }}</td><td>{{ m.assoc }}</td><td>{{ m.time }}</td>
                    </tr>
                  </tbody>
                </table>
              </div>
              <div class="scrollbar">
                <button aria-label="Up"><svg><use href="#i-up" /></svg></button>
                <div class="track"><div class="thumb log-thumb"></div></div>
                <button aria-label="Down"><svg><use href="#i-down" /></svg></button>
              </div>
            </div>
            <div class="scrollbar across">
              <button aria-label="Left"><svg><use href="#i-left" /></svg></button>
              <div class="track"><div class="thumb"></div></div>
              <button aria-label="Right"><svg><use href="#i-right" /></svg></button>
            </div>
          </div>
        </section>
      </main>
    </div>

    <!-- status bar -->
    <footer class="status">
      <div class="cell s1"></div>
      <div class="cell s2"></div>
      <div class="cell s3">
        <svg class="ico" viewBox="0 0 16 16"><path d="M1 5h14v8H8l-4 3v-3H1z" fill="#ffe060" stroke="#a08000" /><circle cx="9" cy="5.500" r="5.500" fill="#1038d0" /><text class="glyph serif" x="7" y="9" font-size="10" fill="#fff">i</text></svg>
        <span>8 Messages</span>
      </div>
      <div class="cell s4">No Selection</div>
      <div class="cell s5"><span>Metric (m, kg, N, s, V, A)</span><span>Degrees</span><span>rad/s</span><span>Celsius</span></div>
      <svg class="resize" viewBox="0 0 14 14"><path d="M1 14L14 1M5 14l9-9M9 14l5-5" stroke="#999" /></svg>
    </footer>
  </div>
</template>

<style>
body {
  margin: 0;
}
</style>

<style scoped>
.app {
  display: flex;
  flex-direction: column;
  height: 100vh;
  overflow: hidden;
  background: #f0f0f0;
  color: #000;
  font: 11px/16px 'Open Sans', 'Noto Sans', sans-serif;
}

.defs {
  position: absolute;
  width: 0;
  height: 0;
}

button {
  display: flex;
  align-items: center;
  margin: 0;
  padding: 0;
  border: none;
  background: none;
  color: inherit;
  font: inherit;
  white-space: nowrap;
}

select,
input {
  box-sizing: border-box;
  margin: 0;
  font: inherit;
}

.glyph {
  font-family: 'Liberation Sans', Arial, sans-serif;
  font-weight: 700;
}

.glyph.serif {
  font-family: 'Liberation Serif', serif;
}

/* ========== title bar ========== */
.title-bar {
  display: flex;
  align-items: center;
  height: 23px;
  flex-shrink: 0;
  background: #fff;
}

.logo {
  width: 16px;
  height: 16px;
  margin: 0 5px 0 2px;
}

.title-bar h1 {
  flex: 1;
  margin: 0;
  font-size: 12px;
  font-weight: 400;
}

.window-buttons {
  display: flex;
  padding-right: 2px;
}

.window-buttons button {
  justify-content: center;
  width: 46px;
}

.window-buttons svg {
  width: 12px;
  height: 12px;
}

/* ========== toolbars ========== */
.bar {
  display: flex;
  align-items: center;
  box-sizing: border-box;
  height: 24px;
  flex-shrink: 0;
  border-top: 1px solid #fff;
  border-bottom: 1px solid #a0a0a0;
  overflow: hidden;
}

.bar.menu {
  height: 25px;
  border-top-color: #f0f0f0;
}

.bar.geometry {
  height: 25px;
  margin-left: 0;
  padding: 0 0 1px;
}

.tool {
  flex-shrink: 0;
  height: 22px;
  gap: 2px;
}

.tool:disabled {
  color: #a0a0a0;
  text-shadow: 1px 1px 0 #fff;
}

.ico {
  width: 16px;
  height: 16px;
  flex-shrink: 0;
  overflow: visible;
}

.tool.on {
  justify-content: center;
  box-sizing: border-box;
  border: 1px solid;
  border-color: #888 #fff #fff #888;
  background: #f8f8f8;
}

.arrow {
  width: 0;
  height: 0;
  border: 4px solid transparent;
  border-top-color: #000;
  border-bottom: none;
}

.dropoff .arrow,
.scale .arrow {
  border-top-color: #a0a0a0;
}

.gap {
  flex-shrink: 0;
}

.grip,
.sep,
.end {
  display: flex;
  height: 18px;
  flex-shrink: 0;
}

.grip::before,
.sep::before {
  content: '';
  width: 1px;
  background: #a0a0a0;
}

.grip::before {
  margin-left: 3px;
  border-right: 1px solid #fff;
}

.grip.wide {
  width: 14px;
}

.end {
  height: 24px;
}

.end::before {
  content: '';
  width: 1px;
  background: #a0a0a0;
  border-right: 1px solid #fff;
}

.combo {
  display: flex;
  align-items: center;
  flex-shrink: 0;
  position: relative;
}

.combo select {
  width: 100%;
  height: 18px;
  padding: 0 5px;
  border: none;
  border-radius: 0;
  background: #fff;
  color: #000;
  appearance: none;
}

.combo .arrow {
  position: absolute;
  right: 5px;
}

.combo.scale {
  width: 147px;
  margin-right: 6px;
}

.combo.scale select {
  background: #e8e8e8;
  color: #888;
  opacity: 1;
}

.assembly {
  width: 138px;
  margin: 0 7px 0 12px;
}

.assembly select {
  padding: 0 3px;
}

.spring {
  width: 27px;
}

.reset {
  width: 58px;
}

.explode {
  width: 96px;
  padding-bottom: 4px;
}

.slider {
  width: 136px;
  height: 16px;
  appearance: none;
  background: linear-gradient(#888, #888) center / 100% 2px no-repeat;
}

.slider::-webkit-slider-thumb {
  appearance: none;
  width: 5px;
  height: 12px;
  border: 1px solid #999;
  background: #f4f4f4;
}

/* ========== side panels ========== */
.work {
  display: flex;
  flex: 1;
  min-height: 0;
  background: #f8f8f8;
}

.side {
  display: flex;
  flex-direction: column;
  gap: 6px;
  width: 323px;
  flex-shrink: 0;
}

.panel {
  display: flex;
  flex-direction: column;
  min-height: 0;
}

.outline {
  flex: 328 1 0;
}

.details {
  flex: 263 1 0;
}

.caption {
  display: flex;
  align-items: center;
  gap: 6px;
  height: 20px;
  flex-shrink: 0;
  margin: 0;
  padding: 0 3px 0 4px;
  background: linear-gradient(90deg, #bccbda, #d6e3f2);
  font-size: 11px;
  font-weight: 400;
}

.caption span {
  flex: 1;
}

.caption.active {
  background: linear-gradient(90deg, #97b3d0, #b8d0ec);
  color: #fff;
}

.caption button svg,
.pin {
  width: 10px;
  height: 10px;
}

.frame {
  display: flex;
  flex-direction: column;
  flex: 1;
  min-height: 0;
  box-sizing: border-box;
  border: 1px solid #e0e0e0;
  border-top: 1px solid #696969;
  border-left: 2px solid #808080;
  background: #f0f0f0;
}

.filter {
  display: flex;
  align-items: center;
  height: 25px;
  flex-shrink: 0;
  border-bottom: 1px solid #a0a0a0;
}

.filter-grip {
  width: 9px;
}

.filter label {
  width: 39px;
}

.filter-by {
  width: 95px;
}

.filter-by select {
  padding: 0 2px;
}

.filter-text {
  width: 143px;
  height: 18px;
  margin-left: 8px;
  border: none;
}

.tree-tools {
  display: flex;
  align-items: center;
  gap: 8px;
  box-sizing: border-box;
  height: 23px;
  flex-shrink: 0;
  padding-bottom: 1px;
}

.tree-tools .grip {
  width: 4px;
}

.tree-tools svg {
  width: 16px;
  height: 16px;
}

.scroll-box {
  display: flex;
  flex: 1;
  min-height: 0;
}

.tree {
  flex: 1;
  margin: 0;
  padding: 0;
  overflow: hidden;
  background: #fff;
  list-style: none;
}

.tree li {
  display: flex;
  align-items: center;
  height: 16px;
}

.tree b {
  font-weight: 700;
}

.root {
  gap: 5px;
  padding-left: 8px;
}

.model,
.geometry {
  padding-left: 8px;
}

.model .ico {
  margin: 0 5px 0 7px;
}

.tree .geometry {
  margin-left: 27px;
}

.geometry .ico {
  margin-right: 3px;
}

.box {
  box-sizing: border-box;
  width: 9px;
  height: 9px;
  flex-shrink: 0;
  border: 1px solid #888;
  background: linear-gradient(#000, #000) center / 5px 1px no-repeat, #fff;
}

.box.plus {
  background: linear-gradient(#000, #000) center / 5px 1px no-repeat, linear-gradient(#000, #000) center / 1px 5px no-repeat, #fff;
}

.dash {
  width: 10px;
  border-top: 1px dotted #888;
}

.tick {
  width: 9px;
  height: 9px;
  flex-shrink: 0;
  margin-top: 7px;
}

.trunk {
  width: 26px;
  height: 16px;
  margin-left: 39px;
  border-left: 1px dotted #888;
}

.branch {
  width: 14px;
  height: 16px;
  border-left: 1px dotted #888;
  background: repeating-linear-gradient(90deg, #888 0 1px, transparent 1px 2px) center / 100% 1px no-repeat;
}

.cube {
  width: 12px;
  height: 12px;
  margin: 0 3px;
}

.name {
  padding: 0 1px;
}

.name.selected {
  background: #f0f0f0;
}

/* ========== scroll bars ========== */
.scrollbar {
  display: flex;
  flex-direction: column;
  width: 16px;
  flex-shrink: 0;
  background: #f0f0f0;
}

.scrollbar button {
  justify-content: center;
}

.scrollbar svg {
  width: 16px;
  height: 16px;
}

.track {
  flex: 1;
}

.thumb {
  background: #cdcdcd;
}

.tree-thumb {
  height: 69%;
}

.details-thumb {
  height: 92%;
}

.log-thumb {
  height: 83%;
}

.across {
  flex-direction: row;
  width: auto;
}

.across .track {
  display: flex;
}

.across .thumb {
  width: 96%;
  height: 15px;
}

/* ========== details grid ========== */
.grid-wrap {
  flex: 1;
  min-width: 0;
  overflow: hidden;
  background: #fff;
}

.grid {
  width: calc(100% - 1px);
  table-layout: fixed;
  border-collapse: collapse;
}

.c-box {
  width: 13px;
}

.c-name {
  width: 126px;
}

.grid th,
.grid td {
  box-sizing: border-box;
  height: 18px;
  padding: 0 0 0 3px;
  border: 1px solid #a0a0a0;
  line-height: 16px;
  text-align: left;
  white-space: nowrap;
}

.grid .gutter {
  padding: 0 2px;
  border-width: 0 1px 0 0;
}

.check {
  display: flex;
  align-items: center;
  gap: 4px;
}

.check input {
  width: 12px;
  height: 12px;
  border: 1px solid #b8b8b8;
  background: #fff;
  appearance: none;
}

/* ========== viewport ========== */
.main {
  display: flex;
  flex-direction: column;
  flex: 1;
  min-width: 0;
  margin-left: 5px;
}

.view {
  flex: 1;
  min-height: 0;
  margin-right: 2px;
  border-top: 1px solid #696969;
  border-left: 2px solid #808080;
  background: linear-gradient(#6a8bde, #fff);
}

.scene {
  display: block;
  width: 100%;
  height: 100%;
}

.ruler-text,
.axis-text {
  font: 13px 'Liberation Sans', Arial, sans-serif;
  text-anchor: middle;
}

.brand {
  fill: #fff;
  font-size: 26px;
  font-weight: 700;
  text-anchor: end;
}

.release {
  fill: #fff;
  font-size: 16px;
  text-anchor: end;
}

.tabs {
  display: flex;
  height: 16px;
  flex-shrink: 0;
  margin: 0 2px 6px 1px;
  border-bottom: 1px solid #000;
  border-left: 1px solid #000;
  background: #f0f0f0;
}

.tab {
  padding: 0 4px 0 1px;
  border-top: 1px solid #000;
}

.tab.current {
  padding-right: 2px;
  border-top-color: #fff;
  background: #fff;
  font-weight: 700;
}

.slant {
  width: 9px;
  height: 16px;
  flex-shrink: 0;
}

.first {
  background: #fff;
}

.tab-rest {
  flex: 1;
  border-top: 1px solid #000;
  border-right: 1px solid #000;
}

/* ========== messages ========== */
.messages {
  display: flex;
  flex-direction: column;
  height: 169px;
  flex-shrink: 0;
}

.messages .caption {
  height: 21px;
}

.messages .frame {
  margin-right: 2px;
}

.table-wrap {
  flex: 1;
  min-width: 0;
  overflow: hidden;
  background: #fff;
}

.log {
  width: 1060px;
  table-layout: fixed;
  border-collapse: separate;
  border-spacing: 0;
}

.c-type {
  width: 50px;
}

.c-text {
  width: 465px;
}

.c-assoc {
  width: 305px;
}

.c-time {
  width: 240px;
}

.log th,
.log td {
  box-sizing: border-box;
  height: 17px;
  padding: 0 3px;
  border-right: 1px solid #c0c0c0;
  border-bottom: 1px solid #c0c0c0;
  overflow: hidden;
  font-weight: 400;
  text-align: left;
  white-space: nowrap;
}

.log th {
  height: 18px;
}

.log th,
.log td:first-child {
  border-color: #696969;
  background: #f0f0f0;
}

/* ========== status bar ========== */
.status {
  display: flex;
  gap: 3px;
  height: 18px;
  flex-shrink: 0;
  padding-top: 6px;
  border-bottom: 2px solid #222;
}

.cell {
  display: flex;
  align-items: center;
  gap: 4px;
  box-sizing: border-box;
  padding-left: 1px;
  border-top: 1px solid #a0a0a0;
  border-left: 1px solid #a0a0a0;
  border-right: 1px solid #fff;
  white-space: nowrap;
}

.s1 {
  width: 367px;
}

.s2 {
  width: 175px;
}

.s3 {
  gap: 2px;
  width: 147px;
}

.s4 {
  flex: 1;
}

.s5 {
  gap: 14px;
  width: 312px;
}

.resize {
  width: 14px;
  height: 14px;
  margin: 4px 0 0 11px;
}
</style>
